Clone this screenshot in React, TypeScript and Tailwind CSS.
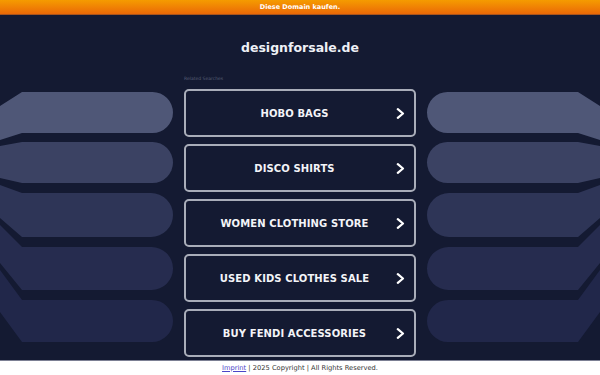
import React from "react";

const searches = [
  "HOBO BAGS",
  "DISCO SHIRTS",
  "WOMEN CLOTHING STORE",
  "USED KIDS CLOTHES SALE",
  "BUY FENDI ACCESSORIES",
];

// decorative shelves on both sides (page coords, mirrored on the right)
const bars = [
  { t0: 106, t: 92, b: 133, b0: 140, fill: "#4f5777" },
  { t0: 146, t: 142, b: 183, b0: 178, fill: "#3b4263" },
  { t0: 185, t: 193, b: 237, b0: 218, fill: "#2e3557" },
  { t0: 225, t: 247, b: 290, b0: 263, fill: "#262c4f" },
  { t0: 270, t: 300, b: 342, b0: 312, fill: "#21274a" },
];

function barPath(bar: { t0: number; t: number; b: number; b0: number }) {
  const r = (bar.b - bar.t) / 2;
  const x = 173 - r;
  return `M0 ${bar.t0} L22 ${bar.t} L${x} ${bar.t} A${r} ${r} 0 0 1 ${x} ${bar.b} L22 ${bar.b} L0 ${bar.b0} Z`;
}

const Shelves = () => (
  <svg
    className="absolute inset-0"
    width="600"
    height="345"
    viewBox="0 15 600 345"
    aria-hidden="true"
  >
    <g>
      {bars.map((bar, i) => (
        <path key={i} d={barPath(bar)} fill={bar.fill} />
      ))}
    </g>
    <g transform="translate(600 0) scale(-1 1)">
      {bars.map((bar, i) => (
        <path key={i} d={barPath(bar)} fill={bar.fill} />
      ))}
    </g>
  </svg>
);

const Chevron = () => (
  <svg width="9" height="11" viewBox="0 0 9 11" className="shrink-0">
    <polyline
      points="1.8,1.2 7,5.5 1.8,9.8"
      fill="none"
      stroke="#ffffff"
      strokeWidth="2.2"
      strokeLinecap="round"
      strokeLinejoin="round"
    />
  </svg>
);

export default function App() {
  return (
    <div className="w-[600px] h-[375px] flex flex-col overflow-hidden font-['DejaVu_Sans',sans-serif]">
      <div className="h-[15px] shrink-0 flex items-center justify-center bg-gradient-to-b from-[#f59b00] to-[#ea6806] border-b border-[#a9541c] text-[6.5px] font-bold text-white leading-none">
        Diese Domain kaufen.
      </div>

      <main className="relative h-[345px] shrink-0 bg-[#141a32]">
        <Shelves />
        <div className="relative flex flex-col items-center">
          <h1 className="mt-[25px] text-[12.5px] leading-[15px] font-bold text-[#eef0f6]">
            designforsale.de
          </h1>
          <div className="w-[232px] mt-[21px]">
            <p className="text-[4.5px] leading-[6px] text-[#575d74] mb-[7px]">
              Related Searches
            </p>
            <ul className="flex flex-col gap-[7px]">
              {searches.map((s) => (
                <li key={s}>
                  <a className="h-[48px] flex items-center gap-[5px] pl-[12px] pr-[9px] rounded-[5px] border-2 border-[#a9adb9] bg-[#141a32]">
                    <span className="flex-1 text-center text-[10px] font-bold text-[#f3f4f8] tracking-[0.1px]">
                      {s}
                    </span>
                    <Chevron />
                  </a>
                </li>
              ))}
            </ul>
          </div>
        </div>
      </main>

      <footer className="h-[15px] shrink-0 bg-white border-t border-[#7c8094] flex items-center justify-center text-[6.7px] text-[#333333] leading-none">
        <a className="underline text-[#4b45c8]">Imprint</a>
        <span>&nbsp;| 2025 Copyright | All Rights Reserved.</span>
      </footer>
    </div>
  );
}
